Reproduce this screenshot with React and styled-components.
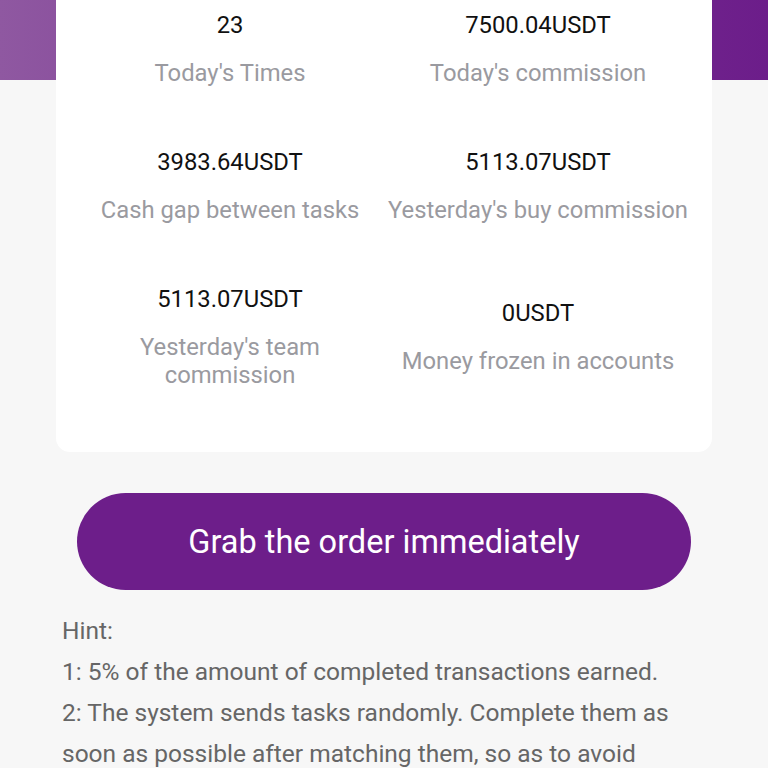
import React from "react";
import styled, { createGlobalStyle } from "styled-components";

const Global = createGlobalStyle`
  html, body { margin: 0; padding: 0; background: #f7f7f7; }
  body { font-family: Roboto, "Noto Sans", "Liberation Sans", sans-serif; }
  * { box-sizing: border-box; }
`;

const Page = styled.div`
  min-height: 768px;
  background: linear-gradient(90deg, #8f58a1 0%, #7a3592 50%, #6c1d8a 100%) top / 100% 80px no-repeat, #f7f7f7;
  padding-bottom: 40px;
`;

const Card = styled.div`
  margin: 0 56px;
  background: #fff;
  border-radius: 0 0 14px 14px;
  padding: 10px 20px 63px;
  display: grid;
  grid-template-columns: 1fr 1fr;
  row-gap: 60px;
`;

const Cell = styled.div`
  display: flex;
  flex-direction: column;
  align-items: center;
  justify-content: center;
  text-align: center;
  padding: 0 2px;
`;

const Value = styled.div`
  font-size: 23.8px;
  line-height: 30px;
  color: #111;
`;

const Label = styled.div`
  margin-top: 19px;
  font-size: 23.8px;
  line-height: 28px;
  color: #9a9aa0;
`;

const Button = styled.button`
  display: flex;
  align-items: center;
  justify-content: center;
  width: 614px;
  height: 97px;
  margin: 41px auto 0;
  border: none;
  border-radius: 49px;
  background: #6d1e8a;
  color: #fff;
  font-family: Roboto, "Noto Sans", sans-serif;
  font-size: 32.5px;
  white-space: nowrap;
  cursor: pointer;
`;

const Hint = styled.div`
  margin: 20px 0 0;
  padding: 0 96px 0 62px;
  color: #666;
  font-size: 24.5px;
  line-height: 41px;
`;

const HintLine = styled.p`
  margin: 0;
`;

const stats = [
  ["23", "Today's Times"],
  ["7500.04USDT", "Today's commission"],
  ["3983.64USDT", "Cash gap between tasks"],
  ["5113.07USDT", "Yesterday's buy commission"],
  ["5113.07USDT", "Yesterday's team commission"],
  ["0USDT", "Money frozen in accounts"],
];

export default function App() {
  return (
    <Page>
      <Global />
      <Card>
        {stats.map(([v, l], i) => (
          <Cell key={i}>
            <Value>{v}</Value>
            <Label>{l}</Label>
          </Cell>
        ))}
      </Card>
      <Button>Grab the order immediately</Button>
      <Hint>
        <HintLine>Hint:</HintLine>
        <HintLine>1: 5% of the amount of completed transactions earned.</HintLine>
        <HintLine>
          2: The system sends tasks randomly. Complete them as soon as possible after matching them, so as to avoid
          the accumulation of funds.
        </HintLine>
      </Hint>
    </Page>
  );
}
